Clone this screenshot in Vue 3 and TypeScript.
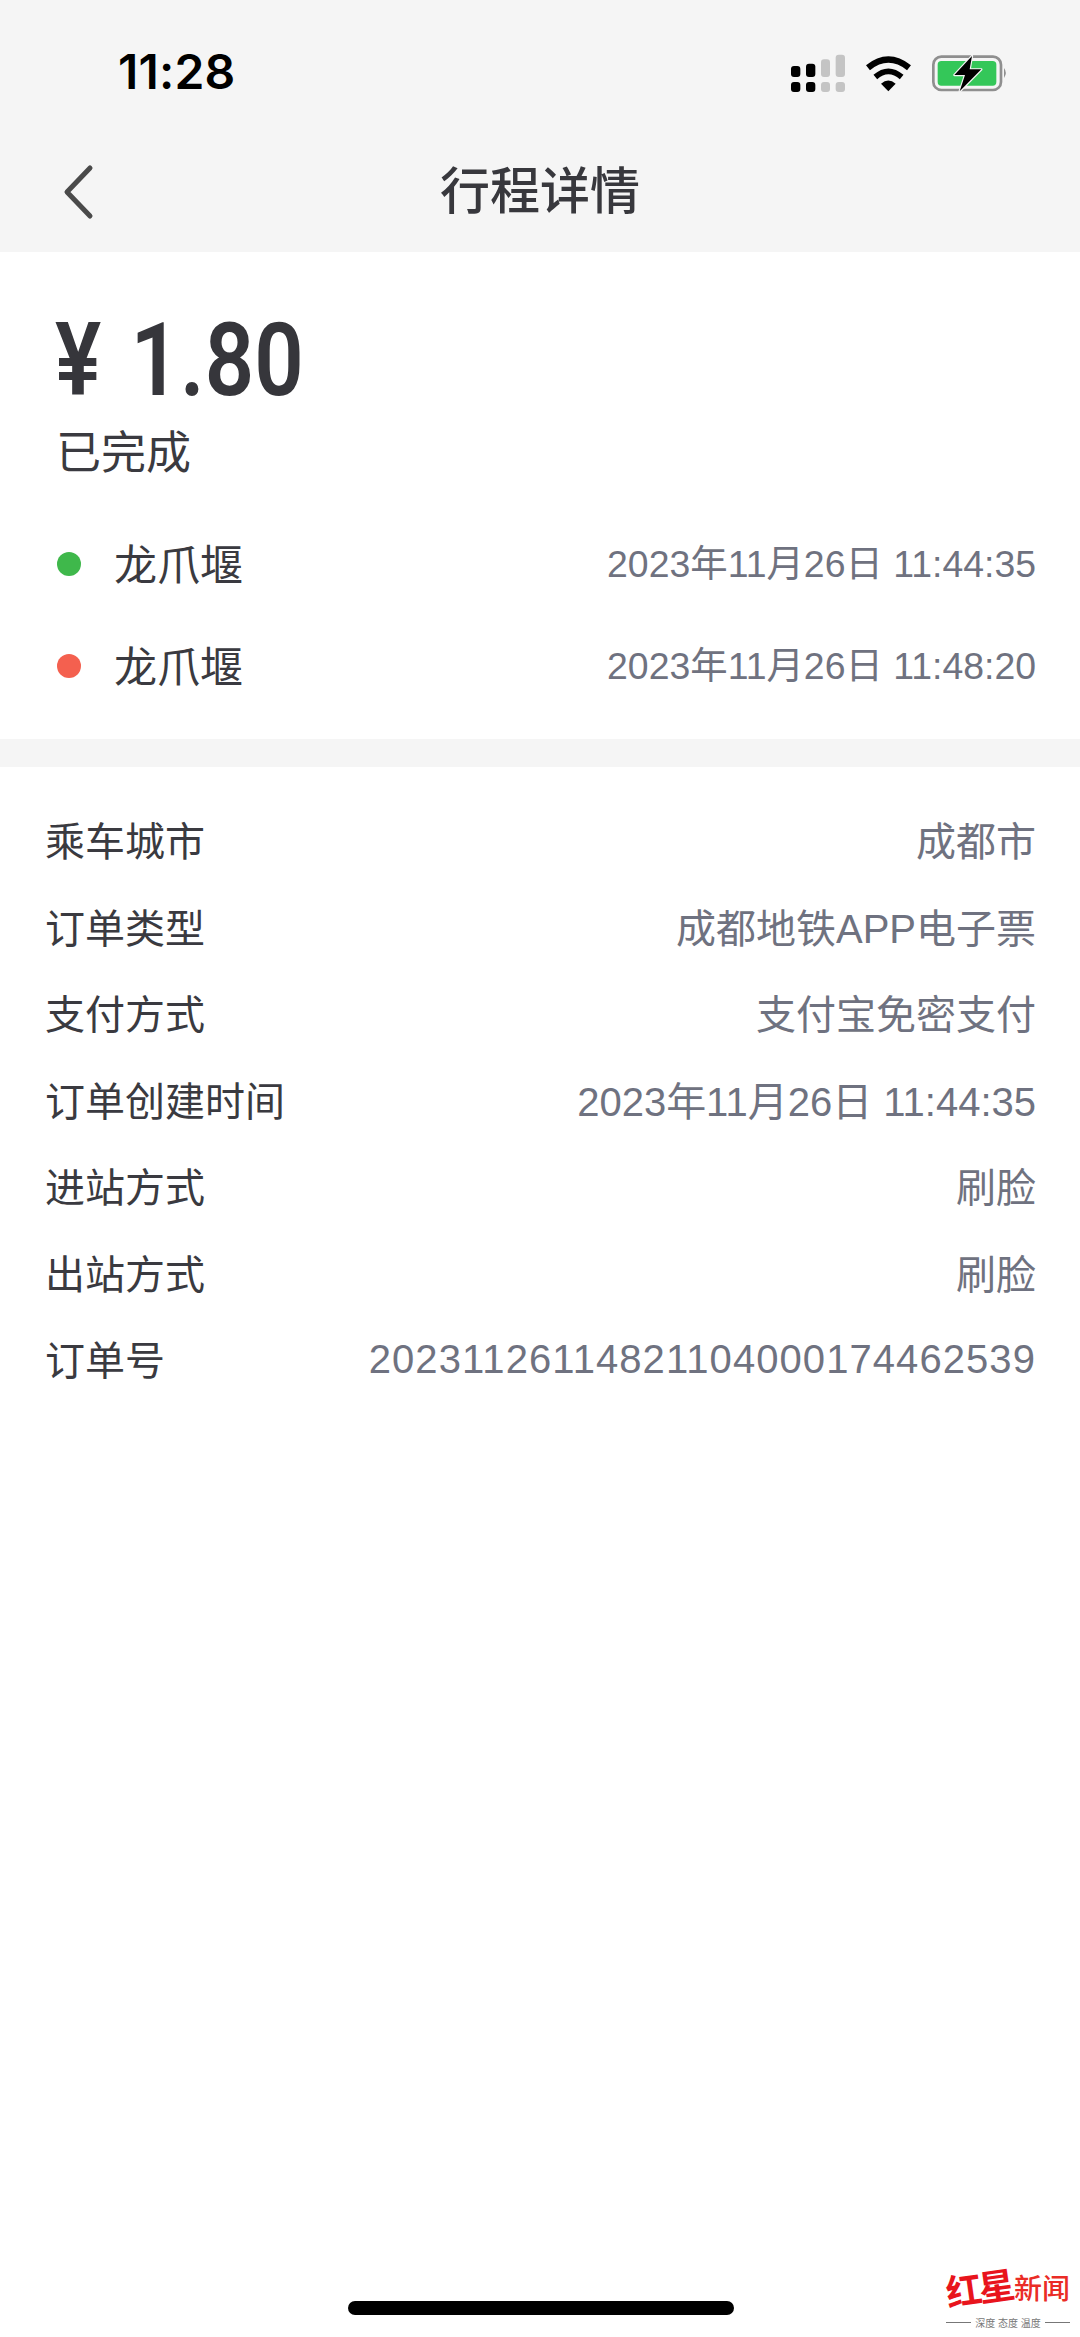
<script setup lang="ts">
interface Stop { name: string; time: string; kind: string }
interface Row { label: string; value: string }
const stops: Stop[] = [
  { name: '龙爪堰', time: '2023年11月26日 11:44:35', kind: 'in' },
  { name: '龙爪堰', time: '2023年11月26日 11:48:20', kind: 'out' },
]
const rows: Row[] = [
  { label: '乘车城市', value: '成都市' },
  { label: '订单类型', value: '成都地铁APP电子票' },
  { label: '支付方式', value: '支付宝免密支付' },
  { label: '订单创建时间', value: '2023年11月26日 11:44:35' },
  { label: '进站方式', value: '刷脸' },
  { label: '出站方式', value: '刷脸' },
  { label: '订单号', value: '20231126114821104000174462539' },
]
</script>

<template>
  <div class="page">
    <header class="top">
      <div class="status">
        <span class="clock">11:28</span>
        <div class="status-icons">
          <svg class="ic-signal" viewBox="150 0 162 240" width="54" height="80">
            <g fill="#000">
              <rect x="150" y="102" width="28" height="33" rx="9" />
              <rect x="195" y="95" width="28" height="40" rx="9" />
              <rect x="150" y="150" width="28" height="30" rx="9" />
              <rect x="195" y="150" width="28" height="30" rx="9" />
            </g>
            <g fill="#c4c4c4">
              <rect x="240" y="82" width="27" height="53" rx="9" />
              <rect x="284" y="68" width="28" height="67" rx="9" />
              <rect x="240" y="150" width="27" height="30" rx="9" />
              <rect x="284" y="150" width="28" height="30" rx="9" />
            </g>
          </svg>
          <svg class="ic-wifi" viewBox="372 0 141 240" width="47" height="80">
            <path d="M381 107 Q442 58 504 107" fill="none" stroke="#000" stroke-width="19" />
            <path d="M403 135 Q442 101 482 135" fill="none" stroke="#000" stroke-width="17" />
            <path d="M420 155 Q442 136 464 155 L442 178 Z" fill="#000" />
          </svg>
          <svg class="ic-batt" viewBox="574 0 228 240" width="76" height="80">
            <rect x="578" y="74" width="203" height="100" rx="24" fill="none" stroke="#8f8f8f" stroke-width="8" />
            <rect x="591" y="87" width="176" height="74" rx="11" fill="#34c759" />
            <path d="M790 108 Q801 122 790 138 Z" fill="#8f8f8f" />
            <path d="M694 72 L641 129 L673 129 L657 178 L722 112 L687 112 Z" fill="#000" stroke="#f5f5f5" stroke-width="7" paint-order="stroke" stroke-linejoin="round" />
          </svg>
        </div>
      </div>
      <nav class="nav">
        <svg class="back" viewBox="0 0 36 60" width="36" height="60">
          <path d="M30 6 L7 30 L30 54" fill="none" stroke="#4a4a4a" stroke-width="5" stroke-linecap="round" stroke-linejoin="round" />
        </svg>
        <h1 class="title">行程详情</h1>
      </nav>
    </header>

    <section class="summary">
      <div class="price"><span class="price-text">¥ 1.80</span></div>
      <div class="state">已完成</div>
      <ul class="stops">
        <li v-for="s in stops" :key="s.time" class="stop">
          <i class="dot" :class="s.kind"></i>
          <span class="stop-name">{{ s.name }}</span>
          <span class="stop-time">{{ s.time }}</span>
        </li>
      </ul>
    </section>

    <section class="details">
      <div v-for="r in rows" :key="r.label" class="row">
        <span class="label">{{ r.label }}</span>
        <span class="value">{{ r.value }}</span>
      </div>
    </section>

    <div class="home-bar"></div>

    <div class="mark">
      <div class="mark-top">
        <span class="mark-star">红星</span>
        <span class="mark-news">新闻</span>
      </div>
      <div class="mark-tag"><i></i><span>深度 态度 温度</span><i></i></div>
    </div>
  </div>
</template>

<style scoped>
.page {
  position: relative;
  width: 1080px;
  height: 2337px;
  overflow: hidden;
  background: #fff;
  font-family: "Liberation Sans", "Noto Sans CJK SC", sans-serif;
  color: #3a3a40;
}
.top { background: #f5f5f5; height: 252px; }
.status {
  height: 142px;
  display: flex;
  align-items: center;
  justify-content: space-between;
  padding: 0 72px 0 118px;
  box-sizing: border-box;
}
.clock {
  font-family: Inter, "Liberation Sans", sans-serif;
  font-size: 48px;
  font-weight: 600;
  color: #000;
  letter-spacing: 0.2px;
}
.status-icons { display: flex; align-items: center; gap: 20px; margin-top: 2px; }
.status-icons svg { display: block; }
.nav {
  height: 100px;
  display: grid;
  grid-template-columns: 1fr auto 1fr;
  align-items: center;
  padding: 0 60px;
}
.back { display: block; }
.title {
  margin: 0;
  font-size: 50px;
  font-weight: 500;
  color: #38383d;
  line-height: 1;
}
.summary { height: 515px; box-sizing: border-box; padding: 56px 44px 0 55px; border-bottom: 28px solid #f5f5f5; }
.price { height: 104px; display: flex; align-items: center; }
.price-text {
  display: inline-block;
  font-family: Roboto, "Liberation Sans", sans-serif;
  font-size: 102px;
  font-weight: 600;
  line-height: 1;
  color: #36363b;
  transform: scaleX(0.85);
  transform-origin: left center;
  white-space: pre;
  word-spacing: 9px;
}
.state { font-size: 45px; line-height: 60px; margin: 12px 0 0 1px; }
.stops { list-style: none; margin: 29px 0 0; padding: 0; }
.stop { display: flex; align-items: center; height: 102px; }
.dot { width: 24px; height: 24px; border-radius: 50%; flex: none; margin-left: 2px; }
.dot.in { background: #3fb84b; }
.dot.out { background: #f4604f; }
.stop-name { font-size: 43px; margin-left: 33px; padding-bottom: 5px; }
.stop-time { margin-left: auto; font-size: 37.4px; color: #6f7280; white-space: nowrap; padding-bottom: 6px; }
.details { padding: 29px 44px 0 45px; }
.row { display: flex; justify-content: space-between; align-items: center; height: 86.5px; font-size: 40px; }
.value { color: #6f7280; white-space: nowrap; }
.row:last-child .value { letter-spacing: 1.07px; padding-top: 2px; }
.home-bar {
  position: absolute;
  left: 348px;
  top: 2301px;
  width: 386px;
  height: 14px;
  border-radius: 7px;
  background: #000;
}
.mark { position: absolute; left: 946px; top: 2266px; width: 124px; background: #fff; }
.mark-top { display: flex; align-items: center; height: 48px; color: #e8141c; white-space: nowrap; }
.mark-star { font-size: 36px; font-weight: 700; line-height: 1; letter-spacing: -3px; transform: rotate(-8deg); }
.mark-news { font-size: 28px; font-weight: 500; line-height: 1; color: #ea2c26; margin-left: 2px; }
.mark-tag { display: flex; align-items: center; gap: 4px; height: 14px; margin-top: 1px; font-size: 10px; color: #777; white-space: nowrap; justify-content: space-between; }
.mark-tag i { flex: 1; height: 1px; background: #777; }
</style>
